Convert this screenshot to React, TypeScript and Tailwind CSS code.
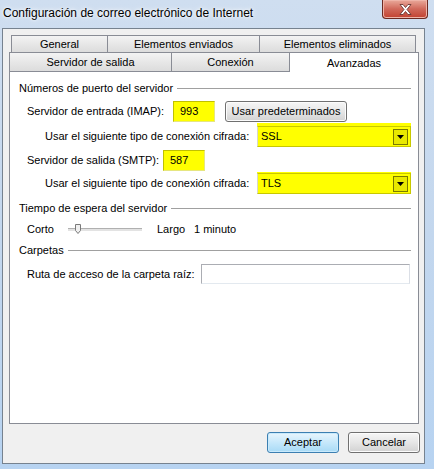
import React from 'react';

const font = "font-['Liberation_Sans','Arial',sans-serif]";

function Tab({ label, w, selected }: { label: string; w: string; selected?: boolean }) {
  if (selected) {
    return (
      <div className={`${w} -mt-px h-[20px] border-l border-t border-r border-[#898c95] bg-white flex justify-center pt-[2px] -mb-px relative`}>
        {label}
      </div>
    );
  }
  return (
    <div className={`${w} h-[19px] border-l border-t border-[#898c95] bg-linear-to-b from-[#f3f3f3] to-[#dcdcdc] flex items-center justify-center`}>
      {label}
    </div>
  );
}

function GroupHeading({ text }: { text: string }) {
  return (
    <div className="flex items-center h-[15px] pl-[9px] pr-[7px] gap-[4px]">
      <span className="whitespace-nowrap">{text}</span>
      <div className="flex-1 h-px bg-[#a0a0a0]" />
    </div>
  );
}

function WinButton({ label, w, primary }: { label: string; w: string; primary?: boolean }) {
  return (
    <div
      className={`${w} h-[21px] rounded-[3px] border flex items-center justify-center whitespace-nowrap ${
        primary
          ? 'border-[#3c7fb1] bg-linear-to-b from-[#e9f6fd] via-[#c6e8fb] to-[#a8daf6] shadow-[inset_0_0_0_1px_#c9eafc]'
          : 'border-[#707070] bg-linear-to-b from-[#f6f6f6] via-[#e6e6e6] to-[#d2d2d2] shadow-[inset_0_0_0_1px_#fcfcfc]'
      }`}
    >
      {label}
    </div>
  );
}

function YellowSelect({ value, tall }: { value: string; tall?: boolean }) {
  return (
    <div className={`w-[154px] ${tall ? 'h-[24px] pt-[3px]' : 'h-[22px] pt-px'} bg-[#ffff00] flex flex-col`}>
      <div className="flex-1 border border-[#c8c800] border-l-[#d8d8c8] flex items-center pl-[3px] pr-[2px]">
        <span className="flex-1">{value}</span>
        <div className="w-[15px] h-[16px] border border-[#7a7a00] bg-[#e8e800] flex items-center justify-center">
          <svg width="7" height="4" viewBox="0 0 7 4">
            <path d="M0 0h7L3.5 4z" fill="#000" />
          </svg>
        </div>
      </div>
    </div>
  );
}

function YellowInput({ value }: { value: string }) {
  return (
    <div className="w-[42px] h-[21px] bg-[#ffff00] border border-[#c0c000] border-r-[#e6e680] border-b-[#e6e680] flex items-center pl-[6px]">
      {value}
    </div>
  );
}

export default function App() {
  return (
    <div className={`w-[434px] h-[469px] bg-linear-to-b from-[#cfdef0] via-[#c3d7ee] to-[#b7d3f1] flex flex-col text-[11px] text-black whitespace-nowrap ${font}`}>
      {/* Title bar */}
      <div className="h-[28px] flex items-start justify-between">
        <div className="pl-[3px] pt-[4px] text-[12px] [text-shadow:0_0_6px_#ffffff,0_0_3px_#ffffff]">
          Configuración de correo electrónico de Internet
        </div>
        <div className="mr-[6px] w-[46px] h-[19px] rounded-b-[4px] border border-t-0 border-[#6b2a22] bg-linear-to-b from-[#e9a99b] via-[#d0685a] to-[#c2402f] shadow-[inset_0_0_0_1px_#efb4a8] flex items-center justify-center">
          <svg width="13" height="11" viewBox="0 0 13 11">
            <path d="M1 0.5h3l2.5 3 2.5-3h3l-4 5 4 5h-3l-2.5-3-2.5 3h-3l4-5z" fill="#fff" stroke="#5a2a24" strokeWidth="0.8" />
          </svg>
        </div>
      </div>

      {/* Client area */}
      <div className="flex-1 ml-[2px] mr-[9px] mb-[5px] border border-[#76828f] bg-[#f0f0f0] flex flex-col pt-[6px] pl-[6px] pr-[5px]">
        {/* Tabs */}
        <div className="w-[410px] flex flex-col">
          <div className="ml-[2px] flex h-[17px]">
            <div className="w-[96px] h-[17px] border-l border-t border-[#898c95] bg-linear-to-b from-[#f3f3f3] to-[#dcdcdc] flex items-center justify-center">General</div>
            <div className="w-[152px] h-[17px] border-l border-t border-[#898c95] bg-linear-to-b from-[#f3f3f3] to-[#dcdcdc] flex items-center justify-center">Elementos enviados</div>
            <div className="w-[157px] h-[17px] border-l border-t border-r border-[#898c95] bg-linear-to-b from-[#f3f3f3] to-[#dcdcdc] flex items-center justify-center">Elementos eliminados</div>
          </div>
          <div className="flex items-end h-[19px]">
            <Tab label="Servidor de salida" w="w-[162px]" />
            <Tab label="Conexión" w="w-[118px]" />
            <Tab label="Avanzadas" w="w-[130px]" selected />
          </div>

          {/* Panel */}
          <div className="h-[353px] border border-[#898c95] bg-white flex flex-col">
            <div className="mt-[9px]">
              <GroupHeading text="Números de puerto del servidor" />
            </div>

            <div className="mt-[5px] h-[21px] flex items-center pl-[17px]">
              <span className="w-[146px]">Servidor de entrada (IMAP):</span>
              <YellowInput value="993" />
              <div className="ml-[10px]">
                <WinButton label="Usar predeterminados" w="w-[122px]" />
              </div>
            </div>

            <div className="mt-px h-[24px] flex items-center pl-[35px]">
              <span className="w-[212px] pt-[2px]">Usar el siguiente tipo de conexión cifrada:</span>
              <YellowSelect value="SSL" tall />
            </div>

            <div className="mt-[3px] h-[21px] flex items-center pl-[17px]">
              <span className="w-[136px]">Servidor de salida (SMTP):</span>
              <YellowInput value="587" />
            </div>

            <div className="mt-px h-[22px] flex items-center pl-[35px]">
              <span className="w-[212px]">Usar el siguiente tipo de conexión cifrada:</span>
              <YellowSelect value="TLS" />
            </div>

            <div className="mt-[7px]">
              <GroupHeading text="Tiempo de espera del servidor" />
            </div>

            <div className="mt-[5px] h-[16px] flex items-center pl-[17px]">
              <span className="w-[41px]">Corto</span>
              <div className="w-[74px] h-[16px] flex items-center relative">
                <div className="w-full h-[3px] bg-[#e3e3e3] border-t border-[#b0b0b0]" />
                <svg className="absolute left-[7px] top-[3px]" width="6" height="10" viewBox="0 0 6 10">
                  <path d="M0.5 0.5h5v6l-2.5 3-2.5-3z" fill="#f0f0f0" stroke="#7a7a7a" />
                </svg>
              </div>
              <span className="ml-[15px] w-[37px]">Largo</span>
              <span>1 minuto</span>
            </div>

            <div className="mt-[6px]">
              <GroupHeading text="Carpetas" />
            </div>

            <div className="mt-[6px] h-[20px] flex items-center pl-[17px]">
              <span className="w-[174px]">Ruta de acceso de la carpeta raíz:</span>
              <div className="w-[209px] h-[20px] border border-[#abadb3] border-r-[#dbdfe6] border-b-[#e3e9ef] bg-white" />
            </div>
          </div>
        </div>

        {/* Buttons */}
        <div className="mt-[8px] w-[411px] flex justify-end gap-[9px]">
          <WinButton label="Aceptar" w="w-[72px]" primary />
          <WinButton label="Cancelar" w="w-[72px]" />
        </div>
      </div>
    </div>
  );
}
